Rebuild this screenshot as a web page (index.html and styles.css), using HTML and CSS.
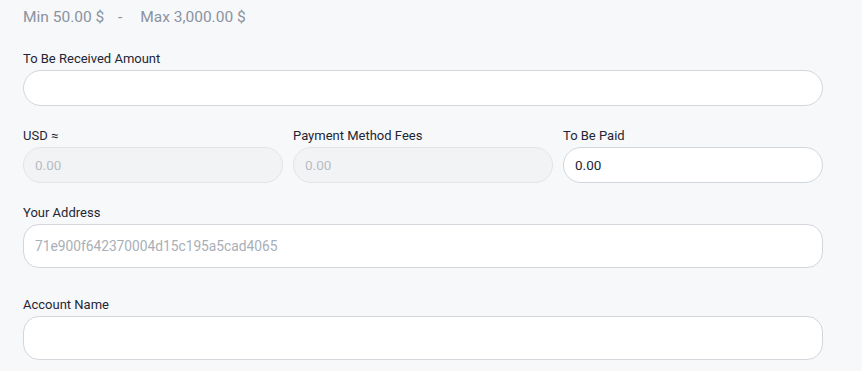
FILE: index.html
```html
<!DOCTYPE html>
<html lang="en">
<head>
<meta charset="UTF-8">
<meta name="viewport" content="width=device-width, initial-scale=1.0">
<title>Withdraw</title>
<link rel="stylesheet" href="styles.css">
</head>
<body>

<div class="form">
    <div class="limits">
        <span>Min 50.00 $</span>
        <span class="dash">-</span>
        <span>Max 3,000.00 $</span>
    </div>

    <div class="field">
        <label for="received">To Be Received Amount</label>
        <input type="text" id="received" class="input">
    </div>

    <div class="row">
        <div class="field">
            <label for="usd">USD &asymp;</label>
            <input type="text" id="usd" class="input" placeholder="0.00" disabled>
        </div>
        <div class="field">
            <label for="fees">Payment Method Fees</label>
            <input type="text" id="fees" class="input" placeholder="0.00" disabled>
        </div>
        <div class="field">
            <label for="paid">To Be Paid</label>
            <input type="text" id="paid" class="input" value="0.00">
        </div>
    </div>

    <div class="field field-tall">
        <label for="address">Your Address</label>
        <input type="text" id="address" class="input input-tall" placeholder="71e900f642370004d15c195a5cad4065">
    </div>

    <div class="field field-tall">
        <label for="account">Account Name</label>
        <input type="text" id="account" class="input input-tall">
    </div>
</div>

</body>
</html>
```

FILE: styles.css
```css
body {
    margin: 0;
    background-color: #f7f8fa;
    font-family: Roboto, "Liberation Sans", sans-serif;
    color: #1e2633;
}
.form {
    width: 800px;
    padding: 7px 0 0 23px;
}
.limits {
    font-size: 15.5px;
    line-height: 20px;
    color: #8a939f;
    margin-bottom: 21px;
}
.limits .dash {
    margin: 0 14px 0 10px;
}
.field {
    display: flex;
    flex-direction: column;
    margin-bottom: 19px;
}
.field label {
    font-size: 13px;
    line-height: 18px;
    margin: 2px 0;
}
.row {
    display: flex;
    gap: 10px;
}
.row .field {
    flex: 1;
}
.input {
    box-sizing: border-box;
    height: 36px;
    padding: 0 11px;
    border: 1px solid #d3d6db;
    border-radius: 18px;
    background-color: #fff;
    font-family: inherit;
    font-size: 13.5px;
    color: #1e2633;
    outline: none;
}
.input::placeholder {
    color: #a9afb7;
}
.input:disabled {
    background-color: #f2f3f5;
    border-color: #e2e4e7;
}
.input:disabled::placeholder {
    color: #b8bcc2;
}
.input-tall {
    height: 44px;
    border-radius: 16px;
    font-size: 13.75px;
}
.field-tall {
    margin-bottom: 26px;
}
```
